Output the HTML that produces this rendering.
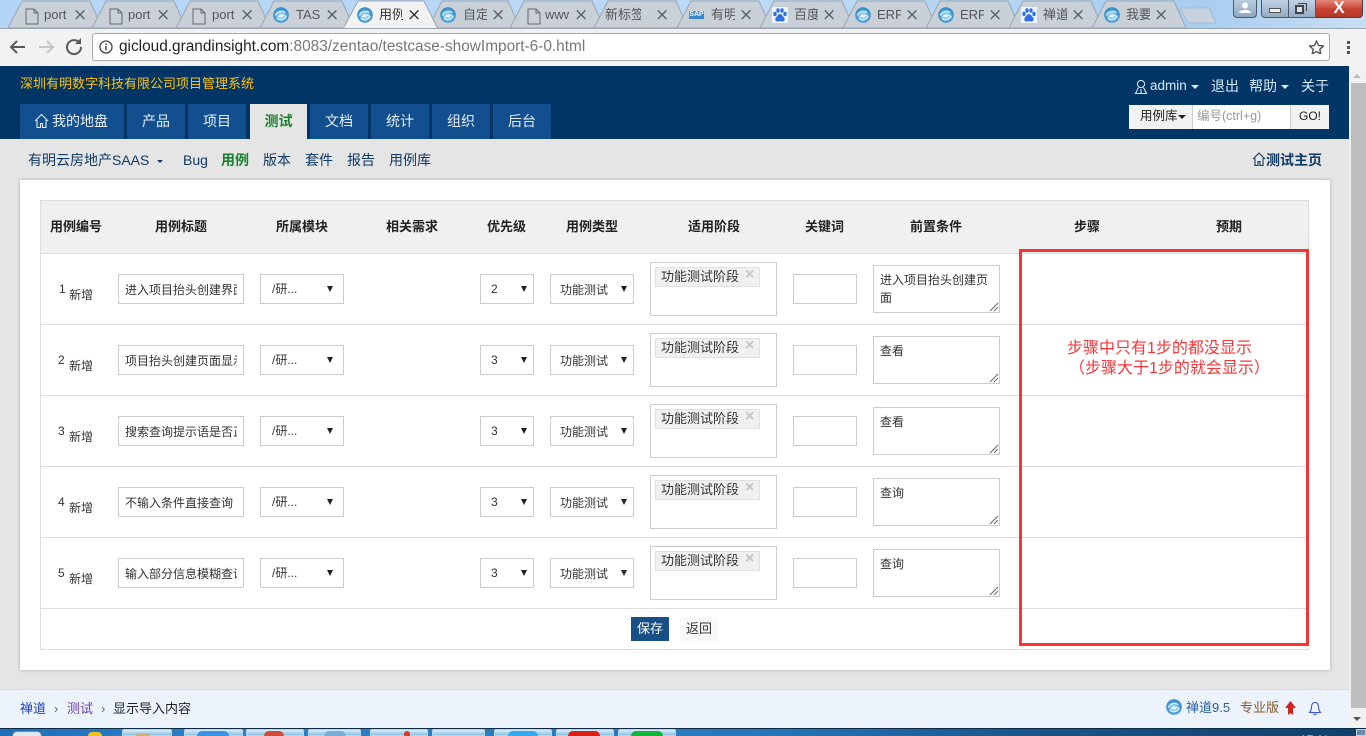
<!DOCTYPE html>
<html lang="zh-CN"><head><meta charset="utf-8"><title>用例</title>
<style>
*{box-sizing:border-box}
html,body{margin:0;padding:0;width:1366px;height:736px;overflow:hidden;background:#e5e5e5}
body{position:relative;font-family:"Liberation Sans","Noto Sans CJK SC",sans-serif;font-size:13px;color:#333}
.a{position:absolute;white-space:nowrap}
.t{position:absolute;white-space:nowrap;line-height:20px;height:20px}
.tabtxt{position:absolute;top:6px;height:18px;line-height:18px;width:24px;overflow:hidden;font-size:13px;color:#555;white-space:nowrap}
.x{position:absolute;top:6px;font-size:17px;line-height:18px;color:#5a6068;font-family:"DejaVu Sans",sans-serif}
.fav{position:absolute;top:7px;width:16px;height:16px}
.bd{position:absolute;top:7px;width:16px;height:16px}
.nav{position:absolute;top:104px;height:35px;background:#114f8e;color:#e8eef5;line-height:35px;text-align:center;font-size:14px;width:58px}
.sub{position:absolute;top:150px;line-height:20px;color:#0f3a66;font-size:14px;white-space:nowrap}
.th{position:absolute;top:217px;line-height:20px;font-weight:bold;color:#222;text-align:center;font-size:13px}
.hl{position:absolute;left:41px;width:1267px;height:1px;background:#ddd}
.box{position:absolute;background:#fff;border:1px solid #ccc;color:#333;font-size:12px;white-space:nowrap;overflow:hidden}
.box span{display:block;overflow:hidden}
.arr{position:absolute;width:0;height:0;margin:-1px 0 0 .5px;border-left:3.5px solid transparent;border-right:3.5px solid transparent;border-top:6px solid #222}
.chip{position:absolute;background:#f0f0f0;border:1px solid #e0e0e0;height:20px;width:105px;line-height:17px;padding-left:5px;font-size:13px;color:#333}
.cx{position:absolute;color:#c4c4c4;font-size:16px;line-height:14px;font-weight:bold}
.tb{position:absolute;top:729px;height:7px;background:linear-gradient(#d8ecf8,#8fc2e4);border:1px solid #b7d4e8;border-radius:2px 2px 0 0}
.dot{position:absolute;top:731px;height:5px;border-radius:6px 6px 0 0}
</style></head><body>

<svg width="0" height="0" style="position:absolute">
<defs>
<radialGradient id="g" cx="50%" cy="55%" r="60%"><stop offset="0" stop-color="#bfe3f6"/><stop offset=".6" stop-color="#4ea3dc"/><stop offset="1" stop-color="#1f78bd"/></radialGradient>
<symbol id="swirl" viewBox="0 0 16 16"><circle cx="8" cy="8" r="7.800" fill="url(#g)"/><path d="M2.500 8.500C4 4.500 9 3.500 12 5.500M4 11c2 2.500 7 2.500 9-1.500C11 8 7.500 7 5.500 9.500c2-.5 3.500 0 4.500 1" fill="none" stroke="#e4f4fc" stroke-width="1.300"/></symbol>
<symbol id="paw" viewBox="0 0 16 16"><rect width="16" height="16" fill="#eef4fd"/><g fill="#2f6fe4"><ellipse cx="3" cy="7" rx="1.700" ry="2.200"/><ellipse cx="6" cy="3.500" rx="1.700" ry="2.300"/><ellipse cx="10" cy="3.500" rx="1.700" ry="2.300"/><ellipse cx="13" cy="7" rx="1.700" ry="2.200"/><path d="M8 7c-2 0-2.500 2-4 3.500S3.500 15 6 14.500c1.500-.3 2.500-.3 4 0 2.500.5 3.500-2.500 2-4S10 7 8 7z"/></g></symbol>
</defs></svg>

<!-- browser tab strip -->
<div class="a" style="left:0;top:0;width:1366px;height:29px;background:linear-gradient(90deg,#b4d5f7,#bcd9f6 60%,#a9cdf0 88%,#c9def2)"></div>
<svg class="a" style="left:0;top:0" width="1366" height="30">
<g fill="#c9d0d8" stroke="#9aa6b2" stroke-width="1">
<path d="M8 28 L22 1 L90 1 L102 28Z"/><path d="M92 28 L106 1 L174 1 L186 28Z"/><path d="M176 28 L190 1 L258 1 L270 28Z"/>
<path d="M260 28 L274 1 L342 1 L354 28Z"/><path d="M428 28 L442 1 L508 1 L520 28Z"/>
<path d="M510 28 L524 1 L592 1 L604 28Z"/><path d="M594 28 L608 1 L676 1 L688 28Z"/><path d="M677 28 L691 1 L759 1 L771 28Z"/>
<path d="M760 28 L774 1 L842 1 L854 28Z"/><path d="M843 28 L857 1 L925 1 L937 28Z"/><path d="M926 28 L940 1 L1008 1 L1020 28Z"/>
<path d="M1009 28 L1023 1 L1091 1 L1103 28Z"/><path d="M1092 28 L1106 1 L1174 1 L1186 28Z"/>
<path d="M1180 8 L1209 8 L1216 23 L1188 23Z" fill="#c6d2de" stroke="#a5bdd2"/>
</g>
<path d="M343 29 L358 1 L424 1 L438 29Z" fill="#f2f2f2" stroke="#9aa6b2"/>
<g fill="none" stroke="#666" stroke-width="1">
<path d="M26 9h8l4 4v11h-12zM34 9v4h4"/><path d="M110 9h8l4 4v11h-12zM118 9v4h4"/><path d="M193 9h8l4 4v11h-12zM201 9v4h4"/><path d="M528 9h8l4 4v11h-12zM536 9v4h4"/>
</g>
</svg>
<div class="tabtxt" style="left:44px">port</div><div class="x" style="left:73px">×</div>
<div class="tabtxt" style="left:128px">port</div><div class="x" style="left:156px">×</div>
<div class="tabtxt" style="left:212px">port</div><div class="x" style="left:240px">×</div>
<svg class="fav" style="left:273px"><use href="#swirl"/></svg><div class="tabtxt" style="left:296px">TAS</div><div class="x" style="left:325px">×</div>
<svg class="fav" style="left:357px"><use href="#swirl"/></svg><div class="tabtxt" style="left:379px;color:#333">用例</div><div class="x" style="left:407px;color:#333">×</div>
<svg class="fav" style="left:440px"><use href="#swirl"/></svg><div class="tabtxt" style="left:463px">自定</div><div class="x" style="left:491px">×</div>
<div class="tabtxt" style="left:545px">www</div><div class="x" style="left:574px">×</div>
<div class="tabtxt" style="left:605px;width:36px">新标签页</div><div class="x" style="left:655px">×</div>
<div class="a" style="left:689px;top:11px;width:15px;height:8px;background:#3a86d0;color:#fff;font-size:7px;line-height:8px;font-weight:bold;text-align:center">SAP</div><div class="tabtxt" style="left:711px">有明</div><div class="x" style="left:739px">×</div>
<svg class="bd" style="left:772px"><use href="#paw"/></svg><div class="tabtxt" style="left:794px">百度</div><div class="x" style="left:822px">×</div>
<svg class="fav" style="left:855px"><use href="#swirl"/></svg><div class="tabtxt" style="left:877px">ERP</div><div class="x" style="left:905px">×</div>
<svg class="fav" style="left:938px"><use href="#swirl"/></svg><div class="tabtxt" style="left:960px">ERP</div><div class="x" style="left:988px">×</div>
<svg class="bd" style="left:1021px"><use href="#paw"/></svg><div class="tabtxt" style="left:1043px">禅道</div><div class="x" style="left:1071px">×</div>
<svg class="fav" style="left:1104px"><use href="#swirl"/></svg><div class="tabtxt" style="left:1126px">我要</div><div class="x" style="left:1154px">×</div>

<!-- window controls -->
<div class="a" style="left:1233px;top:0;width:24px;height:18px;background:linear-gradient(#b9cde0,#8ea6bd);border:1px solid #4a5a6c;border-top:0;border-radius:0 0 4px 4px"></div>
<svg class="a" style="left:1238px;top:2px" width="14" height="12"><circle cx="7" cy="3.500" r="3" fill="#fff"/><path d="M1 11c0-4 12-4 12 0z" fill="#fff"/></svg>
<div class="a" style="left:1261px;top:0;width:28px;height:18px;background:linear-gradient(#c0d2e4,#94abc2);border:1px solid #4a5a6c;border-top:0;border-radius:0 0 0 4px"></div>
<div class="a" style="left:1269px;top:8px;width:12px;height:5px;background:#eef2f6;border:1px solid #555"></div>
<div class="a" style="left:1289px;top:0;width:27px;height:18px;background:linear-gradient(#c0d2e4,#94abc2);border:1px solid #4a5a6c;border-top:0;border-left:0"></div>
<div class="a" style="left:1295px;top:5px;width:9px;height:9px;border:2px solid #444;background:#dde"></div>
<div class="a" style="left:1298px;top:3px;width:9px;height:8px;border:1px solid #444;border-left:0;border-bottom:0"></div>
<div class="a" style="left:1316px;top:0;width:47px;height:18px;background:linear-gradient(#e08a7a,#c8402e 55%,#b23a2a);border:1px solid #4a3a3a;border-top:0;border-left:0;border-radius:0 0 4px 0;color:#fff;text-align:center;font-weight:bold;font-size:17px;line-height:16px">X</div>

<!-- toolbar -->
<div class="a" style="left:0;top:28px;width:1366px;height:38px;background:#f2f2f2;border-top:1px solid #9aa6b2"></div>
<svg class="a" style="left:8px;top:36px" width="76" height="22" fill="none" stroke-width="2">
<path d="M17 11H3M9 5l-6 6 6 6" stroke="#5a5a5a"/>
<path d="M31 11h14M39 5l6 6-6 6" stroke="#c6c6c6"/>
<path d="M73 11a7 7 0 1 1-2.200-5" stroke="#5a5a5a"/><path d="M73 2v6h-6z" fill="#5a5a5a"/>
</svg>
<div class="a" style="left:92px;top:33px;width:1238px;height:28px;background:#fff;border:1px solid #aaa;border-radius:3px"></div>
<svg class="a" style="left:99px;top:40px" width="14" height="14"><circle cx="7" cy="7" r="6" fill="none" stroke="#444" stroke-width="1.300"/><path d="M7 6v4.500M7 3.500v1.500" stroke="#444" stroke-width="1.500"/></svg>
<div class="a" style="left:119px;top:37px;line-height:20px;font-size:15.4px;color:#777"><span style="color:#222">gicloud.grandinsight.com</span>:8083/zentao/testcase-showImport-6-0.html</div>
<svg class="a" style="left:1309px;top:40px" width="15" height="14"><path d="M7.500 1l2 4.500 5 .5-3.700 3.300 1 4.700-4.300-2.500-4.300 2.500 1-4.700L.5 6l5-.5z" fill="none" stroke="#555" stroke-width="1.400"/></svg>
<div class="a" style="left:1347px;top:41px;width:3px;height:3px;background:#555;box-shadow:0 5px 0 #555,0 10px 0 #555"></div>

<!-- header -->
<div class="a" style="left:0;top:66px;width:1349px;height:73px;background:#003566"></div>
<div class="t" style="left:20px;top:74px;color:#ffc20e;font-size:13px">深圳有明数字科技有限公司项目管理系统</div>
<svg class="a" style="left:1134px;top:79px" width="14" height="16" fill="none" stroke="#cfe6f7" stroke-width="1.100"><circle cx="7" cy="5" r="3.600"/><path d="M4.500 8.500L1.500 14.500h11L9.500 8.500M7 10v4"/></svg>
<div class="t" style="left:1150px;top:76px;color:#d6ecfb;font-size:13.5px">admin</div>
<div class="a" style="left:1191px;top:85px;border-left:4px solid transparent;border-right:4px solid transparent;border-top:4px solid #d6ecfb"></div>
<div class="t" style="left:1211px;top:76px;color:#d6ecfb;font-size:14px">退出</div>
<div class="t" style="left:1249px;top:76px;color:#d6ecfb;font-size:14px">帮助</div>
<div class="a" style="left:1281px;top:85px;border-left:4px solid transparent;border-right:4px solid transparent;border-top:4px solid #d6ecfb"></div>
<div class="t" style="left:1301px;top:76px;color:#d6ecfb;font-size:14px">关于</div>
<div class="a" style="left:1129px;top:105px;width:63px;height:24px;background:#f2f2f2;line-height:23px;font-size:12.5px;padding-left:11px;color:#222">用例库</div>
<div class="a" style="left:1178px;top:115px;border-left:4px solid transparent;border-right:4px solid transparent;border-top:4px solid #222"></div>
<div class="a" style="left:1192px;top:105px;width:98px;height:24px;background:#fff;border-left:1px solid #ccc;line-height:23px;font-size:12.5px;padding-left:4px;color:#999">编号(ctrl+g)</div>
<div class="a" style="left:1290px;top:105px;width:39px;height:24px;background:#f2f2f2;border-left:1px solid #ccc;line-height:23px;font-size:12px;text-align:center;color:#222">GO!</div>

<div class="nav" style="left:20px;width:104px;padding-left:16px">我的地盘</div>
<svg class="a" style="left:34px;top:113px" width="15" height="16" fill="none" stroke="#e8eef5" stroke-width="1.100"><path d="M1 8l6.500-6.500L14 8M3 7v7.500h3.500v-4h2v4H12V7"/></svg>
<div class="nav" style="left:127px">产品</div>
<div class="nav" style="left:188px">项目</div>
<div class="nav" style="left:250px;width:57px;background:#e5e5e5;color:#1a7f2e;font-weight:bold">测试</div>
<div class="nav" style="left:310px">文档</div>
<div class="nav" style="left:371px">统计</div>
<div class="nav" style="left:432px">组织</div>
<div class="nav" style="left:493px">后台</div>

<!-- subnav -->
<div class="sub" style="left:28px">有明云房地产SAAS</div>
<div class="a" style="left:157px;top:160px;border-left:3px solid transparent;border-right:3px solid transparent;border-top:3px solid #0f3a66"></div>
<div class="sub" style="left:183px">Bug</div>
<div class="sub" style="left:221px;color:#1a7f2e;font-weight:bold">用例</div>
<div class="sub" style="left:263px">版本</div>
<div class="sub" style="left:305px">套件</div>
<div class="sub" style="left:347px">报告</div>
<div class="sub" style="left:389px">用例库</div>
<svg class="a" style="left:1252px;top:152px" width="14" height="15" fill="none" stroke="#0f3a66" stroke-width="1.100"><path d="M1 7l6-6 6 6M3 6v7.500h3v-4h2v4h3V6"/></svg>
<div class="sub" style="left:1266px;font-weight:bold">测试主页</div>

<!-- card -->
<div class="a" style="left:20px;top:180px;width:1310px;height:490px;background:#fff;box-shadow:0 0 3px rgba(0,0,0,.3)"></div>
<div class="a" style="left:40px;top:200px;width:1269px;height:450px;border:1px solid #ddd;background:#fff"></div>
<div class="a" style="left:41px;top:201px;width:1267px;height:52px;background:#f0f0f0"></div>
<div class="hl" style="top:253px"></div><div class="hl" style="top:324px"></div><div class="hl" style="top:395px"></div><div class="hl" style="top:466px"></div><div class="hl" style="top:537px"></div><div class="hl" style="top:608px"></div>

<div class="th" style="left:50px">用例编号</div>
<div class="th" style="left:155px">用例标题</div>
<div class="th" style="left:276px">所属模块</div>
<div class="th" style="left:386px">相关需求</div>
<div class="th" style="left:487px">优先级</div>
<div class="th" style="left:566px">用例类型</div>
<div class="th" style="left:688px">适用阶段</div>
<div class="th" style="left:805px">关键词</div>
<div class="th" style="left:910px">前置条件</div>
<div class="th" style="left:1074px">步骤</div>
<div class="th" style="left:1216px">预期</div>

<!-- row 1 -->
<div class="t" style="left:59px;top:279px;font-size:12px">1</div><div class="t" style="left:69px;top:285px;font-size:12px">新增</div>
<div class="box" style="left:118px;top:274px;width:126px;height:30px;line-height:30px;padding:0 6px"><span>进入项目抬头创建界面</span></div>
<div class="box" style="left:260px;top:274px;width:84px;height:30px;line-height:28px;padding-left:11px">/研...</div><div class="arr" style="left:326px;top:287px"></div>
<div class="box" style="left:480px;top:274px;width:54px;height:30px;line-height:29px;padding-left:10px">2</div><div class="arr" style="left:520px;top:287px"></div>
<div class="box" style="left:550px;top:274px;width:84px;height:30px;line-height:30px;padding-left:9px">功能测试</div><div class="arr" style="left:620px;top:287px"></div>
<div class="box" style="left:650px;top:262px;width:127px;height:54px"></div>
<div class="chip" style="left:655px;top:267px">功能测试阶段</div><div class="cx" style="left:745px;top:268px">×</div>
<div class="box" style="left:793px;top:274px;width:64px;height:30px"></div>
<div class="box" style="left:873px;top:265px;width:127px;height:48px;padding:5px 6px;line-height:18px;white-space:normal">进入项目抬头创建页面</div>
<svg class="a" style="left:989px;top:302px" width="10" height="10" stroke="#666"><path d="M1 9L9 1M5 9L9 5"/></svg>

<!-- row 2 -->
<div class="t" style="left:58px;top:350px;font-size:12px">2</div><div class="t" style="left:69px;top:356px;font-size:12px">新增</div>
<div class="box" style="left:118px;top:345px;width:126px;height:30px;line-height:30px;padding:0 6px"><span>项目抬头创建页面显示</span></div>
<div class="box" style="left:260px;top:345px;width:84px;height:30px;line-height:28px;padding-left:11px">/研...</div><div class="arr" style="left:326px;top:358px"></div>
<div class="box" style="left:480px;top:345px;width:54px;height:30px;line-height:29px;padding-left:10px">3</div><div class="arr" style="left:520px;top:358px"></div>
<div class="box" style="left:550px;top:345px;width:84px;height:30px;line-height:30px;padding-left:9px">功能测试</div><div class="arr" style="left:620px;top:358px"></div>
<div class="box" style="left:650px;top:333px;width:127px;height:54px"></div>
<div class="chip" style="left:655px;top:338px">功能测试阶段</div><div class="cx" style="left:745px;top:339px">×</div>
<div class="box" style="left:793px;top:345px;width:64px;height:30px"></div>
<div class="box" style="left:873px;top:336px;width:127px;height:48px;padding:5px 6px;line-height:18px;white-space:normal">查看</div>
<svg class="a" style="left:989px;top:373px" width="10" height="10" stroke="#666"><path d="M1 9L9 1M5 9L9 5"/></svg>

<!-- row 3 -->
<div class="t" style="left:58px;top:421px;font-size:12px">3</div><div class="t" style="left:69px;top:427px;font-size:12px">新增</div>
<div class="box" style="left:118px;top:416px;width:126px;height:30px;line-height:30px;padding:0 6px"><span>搜索查询提示语是否正</span></div>
<div class="box" style="left:260px;top:416px;width:84px;height:30px;line-height:28px;padding-left:11px">/研...</div><div class="arr" style="left:326px;top:429px"></div>
<div class="box" style="left:480px;top:416px;width:54px;height:30px;line-height:29px;padding-left:10px">3</div><div class="arr" style="left:520px;top:429px"></div>
<div class="box" style="left:550px;top:416px;width:84px;height:30px;line-height:30px;padding-left:9px">功能测试</div><div class="arr" style="left:620px;top:429px"></div>
<div class="box" style="left:650px;top:404px;width:127px;height:54px"></div>
<div class="chip" style="left:655px;top:409px">功能测试阶段</div><div class="cx" style="left:745px;top:410px">×</div>
<div class="box" style="left:793px;top:416px;width:64px;height:30px"></div>
<div class="box" style="left:873px;top:407px;width:127px;height:48px;padding:5px 6px;line-height:18px;white-space:normal">查看</div>
<svg class="a" style="left:989px;top:444px" width="10" height="10" stroke="#666"><path d="M1 9L9 1M5 9L9 5"/></svg>

<!-- row 4 -->
<div class="t" style="left:58px;top:492px;font-size:12px">4</div><div class="t" style="left:69px;top:498px;font-size:12px">新增</div>
<div class="box" style="left:118px;top:487px;width:126px;height:30px;line-height:30px;padding:0 6px"><span>不输入条件直接查询</span></div>
<div class="box" style="left:260px;top:487px;width:84px;height:30px;line-height:28px;padding-left:11px">/研...</div><div class="arr" style="left:326px;top:500px"></div>
<div class="box" style="left:480px;top:487px;width:54px;height:30px;line-height:29px;padding-left:10px">3</div><div class="arr" style="left:520px;top:500px"></div>
<div class="box" style="left:550px;top:487px;width:84px;height:30px;line-height:30px;padding-left:9px">功能测试</div><div class="arr" style="left:620px;top:500px"></div>
<div class="box" style="left:650px;top:475px;width:127px;height:54px"></div>
<div class="chip" style="left:655px;top:480px">功能测试阶段</div><div class="cx" style="left:745px;top:481px">×</div>
<div class="box" style="left:793px;top:487px;width:64px;height:30px"></div>
<div class="box" style="left:873px;top:478px;width:127px;height:48px;padding:5px 6px;line-height:18px;white-space:normal">查询</div>
<svg class="a" style="left:989px;top:515px" width="10" height="10" stroke="#666"><path d="M1 9L9 1M5 9L9 5"/></svg>

<!-- row 5 -->
<div class="t" style="left:58px;top:563px;font-size:12px">5</div><div class="t" style="left:69px;top:569px;font-size:12px">新增</div>
<div class="box" style="left:118px;top:558px;width:126px;height:30px;line-height:30px;padding:0 6px"><span>输入部分信息模糊查询</span></div>
<div class="box" style="left:260px;top:558px;width:84px;height:30px;line-height:28px;padding-left:11px">/研...</div><div class="arr" style="left:326px;top:571px"></div>
<div class="box" style="left:480px;top:558px;width:54px;height:30px;line-height:29px;padding-left:10px">3</div><div class="arr" style="left:520px;top:571px"></div>
<div class="box" style="left:550px;top:558px;width:84px;height:30px;line-height:30px;padding-left:9px">功能测试</div><div class="arr" style="left:620px;top:571px"></div>
<div class="box" style="left:650px;top:546px;width:127px;height:54px"></div>
<div class="chip" style="left:655px;top:551px">功能测试阶段</div><div class="cx" style="left:745px;top:552px">×</div>
<div class="box" style="left:793px;top:558px;width:64px;height:30px"></div>
<div class="box" style="left:873px;top:549px;width:127px;height:48px;padding:5px 6px;line-height:18px;white-space:normal">查询</div>
<svg class="a" style="left:989px;top:586px" width="10" height="10" stroke="#666"><path d="M1 9L9 1M5 9L9 5"/></svg>

<!-- buttons -->
<div class="a" style="left:631px;top:617px;width:38px;height:24px;background:#174f87;color:#fff;text-align:center;line-height:23px;font-size:13px">保存</div>
<div class="a" style="left:680px;top:617px;width:38px;height:24px;background:#f8f8f8;color:#333;text-align:center;line-height:23px;font-size:13px">返回</div>

<!-- red annotation -->
<div class="a" style="left:1019px;top:249px;width:290px;height:397px;border:3px solid #f73539"></div>
<div class="t" style="left:1067px;top:339px;color:#f73539;font-size:16px">步骤中只有1步的都没显示</div>
<div class="t" style="left:1069px;top:359px;color:#f73539;font-size:16px">（步骤大于1步的就会显示）</div>

<!-- footer -->
<div class="a" style="left:0;top:689px;width:1349px;height:39px;background:#ecf3fd;border-top:1px solid #ddd"></div>
<div class="t" style="left:20px;top:699px;color:#1a3fbf">禅道</div>
<div class="t" style="left:54px;top:699px;color:#667">›</div>
<div class="t" style="left:67px;top:699px;color:#6b3fa8">测试</div>
<div class="t" style="left:101px;top:699px;color:#667">›</div>
<div class="t" style="left:113px;top:699px;color:#222">显示导入内容</div>
<svg class="a" style="left:1166px;top:699px" width="16" height="16"><use href="#swirl"/></svg>
<div class="t" style="left:1186px;top:698px;color:#2c5f9e">禅道9.5</div>
<div class="t" style="left:1240px;top:698px;color:#8a5a2a">专业版</div>
<svg class="a" style="left:1284px;top:700px" width="13" height="16"><path d="M6.500 1L12 8H9v7L6.500 13 4 15V8H1z" fill="#d0211c"/></svg>
<svg class="a" style="left:1308px;top:701px" width="14" height="15" fill="none" stroke="#3b4fd0" stroke-width="1.100"><path d="M7 1.500c-3 0-3.500 3-3.500 5S2.500 10 1.500 11.500h11c-1-1.500-2-3-2-5S10 1.500 7 1.500zM5.500 12.500c.5 1.500 2.500 1.500 3 0"/></svg>

<!-- scrollbar -->
<div class="a" style="left:1349px;top:66px;width:17px;height:662px;background:#f1f1f1"></div>
<div class="a" style="left:1351px;top:83px;width:15px;height:625px;background:#bdbdbd"></div>
<div class="a" style="left:1353px;top:74px;border-left:4px solid transparent;border-right:4px solid transparent;border-bottom:4px solid #bbb"></div>
<div class="a" style="left:1353px;top:717px;border-left:4px solid transparent;border-right:4px solid transparent;border-top:4px solid #555"></div>

<!-- taskbar -->
<div class="a" style="left:0;top:728px;width:1366px;height:8px;background:linear-gradient(90deg,#1e6fb8,#2f80c4 15%,#2778bd 55%,#1b5588 75%,#123f6b);border-top:1px solid #0d2a45"></div>
<div class="a" style="left:12px;top:731px;width:30px;height:5px;background:#dfe8ef;border:1px solid #789;border-bottom:0;border-radius:15px 15px 0 0"></div>
<div class="dot" style="left:88px;width:14px;top:732px;height:4px;background:#f0c020"></div>
<div class="tb" style="left:122px;width:50px"></div><div class="dot" style="left:136px;width:14px;top:733px;height:3px;background:#d6b070"></div>
<div class="tb" style="left:184px;width:59px"></div><div class="dot" style="left:197px;width:32px;background:#3b93e8"></div>
<div class="tb" style="left:246px;width:58px"></div><div class="dot" style="left:264px;width:20px;background:#d24a3a"></div>
<div class="tb" style="left:308px;width:53px"></div><div class="dot" style="left:324px;width:22px;background:#7aaed6"></div>
<div class="tb" style="left:370px;width:58px"></div><div class="dot" style="left:404px;width:6px;background:#d83a2a"></div>
<div class="tb" style="left:432px;width:53px"></div>
<div class="tb" style="left:494px;width:58px"></div><div class="dot" style="left:508px;width:30px;background:#35a9ee"></div>
<div class="tb" style="left:556px;width:58px"></div><div class="dot" style="left:568px;width:32px;background:#dc2018"></div>
<div class="tb" style="left:618px;width:58px"></div><div class="dot" style="left:631px;width:32px;background:#12b53c"></div>
<div class="a" style="left:1300px;top:733px;color:#fff;font-size:12px;line-height:14px">17:11</div>
<div class="a" style="left:1356px;top:729px;width:10px;height:7px;background:#6d8ba8;border:1px solid #c2d0dc"></div>
</body></html>
